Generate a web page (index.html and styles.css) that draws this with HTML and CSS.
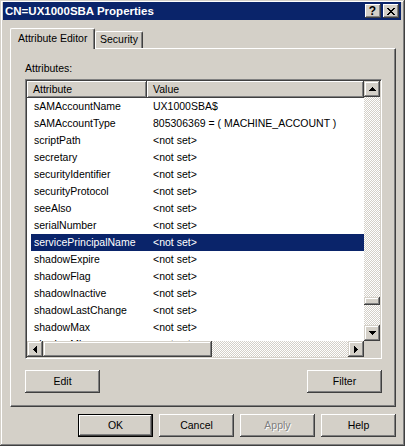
FILE: index.html
```html
<!DOCTYPE html>
<html>
<head>
<meta charset="utf-8">
<link rel="stylesheet" href="styles.css">
</head>
<body>
<div class="window">
  <div class="titlebar">
    <span class="title">CN=UX1000SBA Properties</span>
    <div class="tbtns">
      <span class="tbtn help">?</span>
      <span class="tbtn close">
        <svg width="8" height="7" viewBox="0 0 8 7" shape-rendering="crispEdges">
          <path d="M0 0h2v1h1v1h2V1h1V0h2v1H7v1H6v1H5v1h1v1h1v1h1v1H6V6H5V5H3v1H2v1H0V6h1V5h1V4h1V3H2V2H1V1H0z" fill="#000"/>
        </svg>
      </span>
    </div>
  </div>

  <div class="tabs">
    <div class="tab active">Attribute Editor</div>
    <div class="tab">Security</div>
  </div>

  <div class="panel">
    <div class="label">Attributes:</div>
    <div class="listbox">
      <div class="listmain">
        <div class="listview">
          <div class="header">
            <div class="hcell c1">Attribute</div>
            <div class="hcell c2">Value</div>
          </div>
          <div class="rows">
            <div class="row"><span class="a">sAMAccountName</span><span class="v">UX1000SBA$</span></div>
            <div class="row"><span class="a">sAMAccountType</span><span class="v">805306369 = ( MACHINE_ACCOUNT )</span></div>
            <div class="row"><span class="a">scriptPath</span><span class="v">&lt;not set&gt;</span></div>
            <div class="row"><span class="a">secretary</span><span class="v">&lt;not set&gt;</span></div>
            <div class="row"><span class="a">securityIdentifier</span><span class="v">&lt;not set&gt;</span></div>
            <div class="row"><span class="a">securityProtocol</span><span class="v">&lt;not set&gt;</span></div>
            <div class="row"><span class="a">seeAlso</span><span class="v">&lt;not set&gt;</span></div>
            <div class="row"><span class="a">serialNumber</span><span class="v">&lt;not set&gt;</span></div>
            <div class="row selected"><span class="a">servicePrincipalName</span><span class="v">&lt;not set&gt;</span></div>
            <div class="row"><span class="a">shadowExpire</span><span class="v">&lt;not set&gt;</span></div>
            <div class="row"><span class="a">shadowFlag</span><span class="v">&lt;not set&gt;</span></div>
            <div class="row"><span class="a">shadowInactive</span><span class="v">&lt;not set&gt;</span></div>
            <div class="row"><span class="a">shadowLastChange</span><span class="v">&lt;not set&gt;</span></div>
            <div class="row"><span class="a">shadowMax</span><span class="v">&lt;not set&gt;</span></div>
            <div class="row"><span class="a">shadowMin</span><span class="v">&lt;not set&gt;</span></div>
          </div>
        </div>
        <div class="vscroll">
          <div class="sbtn">
            <svg width="7" height="4" viewBox="0 0 7 4" shape-rendering="crispEdges"><path d="M3 0h1v1h1v1h1v1h1v1H0V3h1V2h1V1h1z" fill="#000"/></svg>
          </div>
          <div class="trough vtrough"><div class="vthumb"></div></div>
          <div class="sbtn">
            <svg width="7" height="4" viewBox="0 0 7 4" shape-rendering="crispEdges"><path d="M0 0h7v1H6v1H5v1H4v1H3V3H2V2H1V1H0z" fill="#000"/></svg>
          </div>
        </div>
      </div>
      <div class="hrow">
        <div class="hscroll">
          <div class="sbtn">
            <svg width="4" height="7" viewBox="0 0 4 7" shape-rendering="crispEdges"><path d="M3 0h1v7H3V6H2V5H1V4H0V3h1V2h1V1h1z" fill="#000"/></svg>
          </div>
          <div class="hthumb"></div>
          <div class="trough htrough"></div>
          <div class="sbtn">
            <svg width="4" height="7" viewBox="0 0 4 7" shape-rendering="crispEdges"><path d="M0 0h1v1h1v1h1v1h1v1H3v1H2v1H1v1H0z" fill="#000"/></svg>
          </div>
        </div>
        <div class="corner"></div>
      </div>
    </div>
    <div class="actions">
      <div class="btn">Edit</div>
      <div class="btn">Filter</div>
    </div>
  </div>

  <div class="footer">
    <div class="btn default">OK</div>
    <div class="btn">Cancel</div>
    <div class="btn disabled">Apply</div>
    <div class="btn">Help</div>
  </div>
</div>
</body>
</html>
```
FILE: styles.css
```css
html, body {
  margin: 0;
  padding: 0;
  background: #d4d0c8;
}

body {
  font-family: "Liberation Sans", Arial, sans-serif;
  font-size: 10.5px;
  color: #000;
}

.window {
  width: 405px;
  height: 446px;
  box-sizing: border-box;
  padding: 2px 4px 0 3px;
  background: #d4d0c8;
  box-shadow: inset -1px -1px #404040, inset 1px 1px #d4d0c8,
              inset -2px -2px #808080, inset 2px 2px #fff;
  display: flex;
  flex-direction: column;
}

.titlebar {
  height: 18px;
  flex: none;
  background: #0a246a;
  display: flex;
  align-items: center;
  justify-content: space-between;
  padding-left: 2px;
  color: #fff;
}

.title {
  font-weight: bold;
  font-size: 11.5px;
  line-height: 18px;
  white-space: nowrap;
}

.tbtns {
  display: flex;
  gap: 2px;
  padding-right: 2px;
}

.tbtn {
  width: 16px;
  height: 14px;
  box-sizing: border-box;
  background: #d4d0c8;
  box-shadow: inset -1px -1px #404040, inset 1px 1px #fff,
              inset -2px -2px #808080, inset 2px 2px #d4d0c8;
  display: flex;
  align-items: center;
  justify-content: center;
  color: #000;
}

.tbtn.help {
  font-weight: bold;
  font-size: 12px;
  line-height: 14px;
  padding-bottom: 1px;
  padding-right: 1px;
}

.tbtn.close svg {
  display: block;
  margin-right: 1px;
}

.tabs {
  display: flex;
  align-items: flex-end;
  height: 20px;
  flex: none;
  margin: 8px 0 0 7px;
  position: relative;
  z-index: 1;
}

.tab {
  height: 17px;
  width: 48px;
  box-sizing: border-box;
  padding: 1px 0 0 4px;
  line-height: 13px;
  background: #d4d0c8;
  border-top: 1px solid #fff;
  border-left: 1px solid #fff;
  border-right: 1px solid #404040;
  border-radius: 2px 2px 0 0;
  box-shadow: inset -1px 0 #808080;
  white-space: nowrap;
}

.tab.active {
  height: 21px;
  width: 85px;
  margin-bottom: -1px;
  padding: 3px 0 0 7px;
}

.panel {
  margin-left: 7px;
  width: 386px;
  height: 359px;
  flex: none;
  box-sizing: border-box;
  border-top: 1px solid #fff;
  border-left: 1px solid #fff;
  border-right: 1px solid #404040;
  border-bottom: 1px solid #404040;
  box-shadow: inset -1px -1px #808080;
  padding: 13px 13px 13px 14px;
  display: flex;
  flex-direction: column;
}

.label {
  line-height: 13px;
  height: 13px;
}

.listbox {
  margin-top: 4px;
  width: 357px;
  height: 280px;
  box-sizing: border-box;
  border-top: 1px solid #808080;
  border-left: 1px solid #808080;
  border-right: 1px solid #fff;
  border-bottom: 1px solid #fff;
  box-shadow: inset 1px 1px #404040, inset -1px -1px #d4d0c8;
  padding: 1px;
  background: #fff;
  display: flex;
  flex-direction: column;
}

.listmain {
  display: flex;
  height: 260px;
}

.listview {
  width: 337px;
  overflow: hidden;
  display: flex;
  flex-direction: column;
}

.header {
  display: flex;
  height: 17px;
  flex: none;
}

.hcell {
  box-sizing: border-box;
  height: 17px;
  line-height: 16px;
  padding-left: 6px;
  background: #d4d0c8;
  box-shadow: inset -1px -1px #404040, inset 1px 1px #fff,
              inset -2px -2px #808080;
}

.hcell.c1 {
  width: 120px;
}

.hcell.c2 {
  flex: 1;
}

.rows {
  height: 243px;
  overflow: hidden;
}

.row {
  display: flex;
  height: 17px;
  line-height: 17px;
  margin-left: 4px;
  white-space: nowrap;
}

.row .a {
  width: 116px;
  box-sizing: border-box;
  padding-left: 3px;
  flex: none;
}

.row .v {
  padding-left: 6px;
}

.row.selected {
  background: #0a246a;
  color: #fff;
}

.vscroll {
  width: 16px;
  display: flex;
  flex-direction: column;
}

.sbtn {
  width: 16px;
  height: 16px;
  flex: none;
  box-sizing: border-box;
  background: #d4d0c8;
  box-shadow: inset -1px -1px #404040, inset 1px 1px #d4d0c8,
              inset -2px -2px #808080, inset 2px 2px #fff;
  display: flex;
  align-items: center;
  justify-content: center;
}

.sbtn svg {
  display: block;
}

.trough {
  background: repeating-conic-gradient(#fff 0 25%, #d4d0c8 0 50%) 0 0 / 2px 2px;
}

.vtrough {
  flex: 1;
}

.vthumb {
  margin-top: 200px;
  height: 8px;
  background: #d4d0c8;
  box-shadow: inset -1px -1px #404040, inset 1px 1px #d4d0c8,
              inset -2px -2px #808080, inset 2px 2px #fff;
}

.hrow {
  display: flex;
  height: 16px;
}

.hscroll {
  width: 337px;
  display: flex;
}

.hthumb {
  width: 169px;
  height: 16px;
  background: #d4d0c8;
  box-shadow: inset -1px -1px #404040, inset 1px 1px #d4d0c8,
              inset -2px -2px #808080, inset 2px 2px #fff;
}

.htrough {
  flex: 1;
}

.corner {
  width: 16px;
  background: #d4d0c8;
}

.actions {
  margin-top: 11px;
  display: flex;
  justify-content: space-between;
  width: 357px;
}

.btn {
  width: 75px;
  height: 23px;
  box-sizing: border-box;
  background: #d4d0c8;
  box-shadow: inset -1px -1px #404040, inset 1px 1px #fff,
              inset -2px -2px #808080, inset 2px 2px #d4d0c8;
  display: flex;
  align-items: center;
  justify-content: center;
  line-height: 13px;
}

.btn.default {
  box-shadow: inset 0 0 0 1px #000, inset -2px -2px #404040, inset 2px 2px #fff,
              inset -3px -3px #808080, inset 3px 3px #d4d0c8;
}

.btn.disabled {
  color: #808080;
  text-shadow: 1px 1px 0 #fff;
}

.footer {
  margin-top: 7px;
  margin-right: 5px;
  display: flex;
  justify-content: flex-end;
  gap: 6px;
}
```
